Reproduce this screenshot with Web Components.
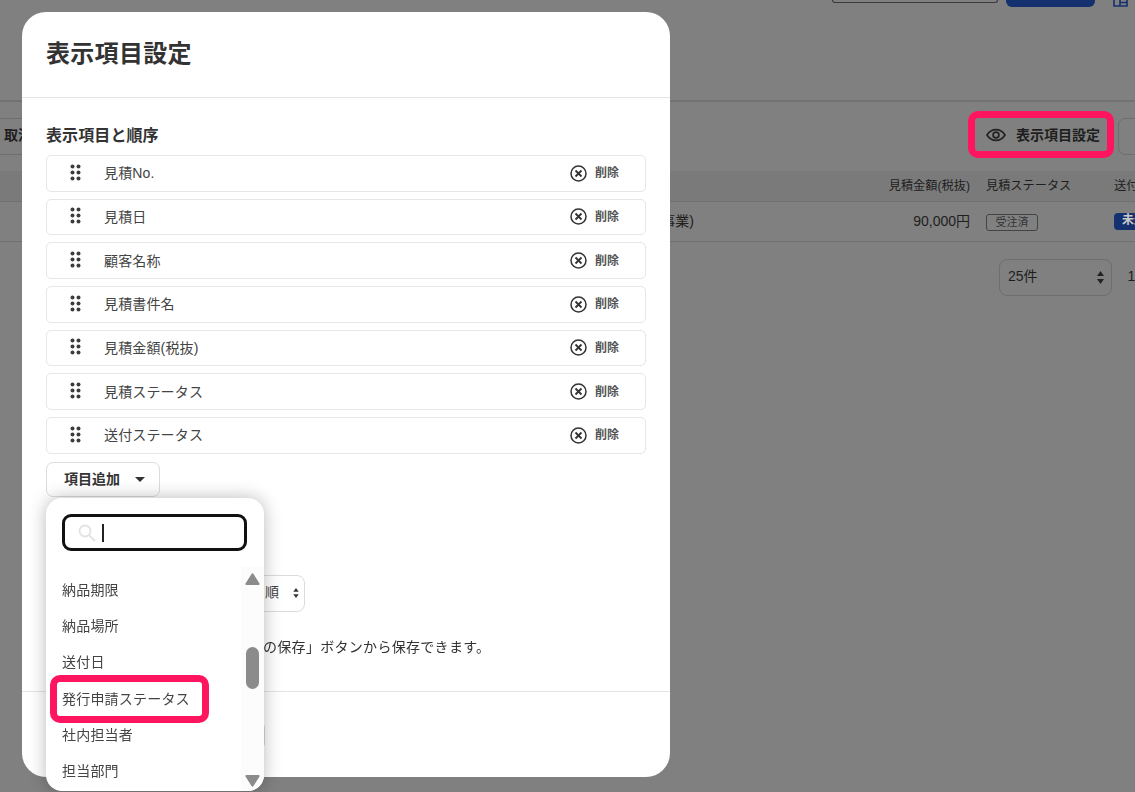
<!DOCTYPE html>
<html lang="ja">
<head>
<meta charset="utf-8">
<title>表示項目設定</title>
<style>
  html, body { margin: 0; height: 792px; overflow: hidden; background: #808080; }
  body { font-family: "Liberation Sans", "Noto Sans CJK JP", sans-serif; font-size: 14px; color: #333; }
</style>
</head>
<body>
<list-page></list-page>
<settings-modal>
  <setting-row>見積No.</setting-row>
  <setting-row>見積日</setting-row>
  <setting-row>顧客名称</setting-row>
  <setting-row>見積書件名</setting-row>
  <setting-row>見積金額(税抜)</setting-row>
  <setting-row>見積ステータス</setting-row>
  <setting-row>送付ステータス</setting-row>
  <add-menu slot="menu">
    <menu-item>納品期限</menu-item>
    <menu-item>納品場所</menu-item>
    <menu-item>送付日</menu-item>
    <menu-item highlight>発行申請ステータス</menu-item>
    <menu-item>社内担当者</menu-item>
    <menu-item>担当部門</menu-item>
  </add-menu>
</settings-modal>

<script>
const spinner = `<svg width="7" height="13" viewBox="0 0 7 13" fill="currentColor"><path d="M3.5 0 7 5H0z"/><path d="M3.5 13 0 8h7z"/></svg>`;

class ListPage extends HTMLElement {
  connectedCallback() {
    this.attachShadow({ mode: "open" }).innerHTML = `
      <style>
        :host { display: block; width: 1135px; overflow: hidden; color: #1e1e1e; }
        .top { display: flex; height: 100px; border-bottom: 2px solid #727272; padding-left: 832px; align-items: flex-start; }
        .search { width: 166px; height: 3px; box-sizing: border-box; border: 1px solid #3a3a3a; border-top: 0; border-radius: 0 0 4px 4px; }
        .primary { width: 89px; height: 7px; margin-left: 8px; background: #14306e; border-radius: 0 0 6px 6px; }
        .grid-icon { margin-left: 18px; color: #14306e; display: block; }
        .toolbar { display: flex; height: 69px; padding-top: 9px; box-sizing: border-box; }
        .cancel { flex: none; width: 60px; height: 37px; margin-top: 7px; box-sizing: border-box; border-top: 1px solid #6e6e6e; border-bottom: 1px solid #6e6e6e; padding-left: 4px; font-weight: 700; font-size: 14px; line-height: 33px; white-space: nowrap; }
        .eye-wrap { margin-left: 908px; width: 146px; height: 47px; box-sizing: border-box; border: 7px solid #ff1460; border-radius: 10px; display: flex; align-items: center; gap: 10px; padding-left: 11px; font-weight: 700; font-size: 14px; white-space: nowrap; flex: none; }
        .eye-wrap span { margin-top: -2px; }
        .other { margin: 7px 0 0 4px; width: 50px; height: 37px; box-sizing: border-box; border: 1px solid #6e6e6e; border-radius: 7px; flex: none; }
        .row { display: grid; grid-template-columns: 694px 276px 144px 21px; align-items: center; white-space: nowrap; }
        .head { height: 31px; background: #7a7a7a; border-bottom: 1px solid #707070; box-sizing: border-box; font-size: 12.200px; }
        .head span { margin-bottom: 2px; }
        .body { height: 40px; border-bottom: 1px solid #707070; box-sizing: border-box; }
        .body .r { margin-bottom: 3px; }
        .r { text-align: right; }
        .pad { padding-left: 16px; }
        .clip { overflow: hidden; }
        .badge { display: inline-block; height: 17px; line-height: 14px; box-sizing: border-box; border: 1px solid #444; border-radius: 3px; padding: 0 8.500px; font-size: 11px; color: #333; }
        .blue { display: block; height: 17px; line-height: 15px; background: #14306e; color: #c8c8c8; border-radius: 4px 0 0 4px; padding-left: 8px; font-size: 12px; font-weight: 700; }
        .pager { display: flex; padding: 17px 0 0 999px; align-items: center; white-space: nowrap; }
        .per { width: 113px; height: 37px; box-sizing: border-box; border: 1px solid #6e6e6e; border-radius: 8px; padding: 0 7px 0 8px; display: flex; align-items: center; justify-content: space-between; flex: none; }
        .per span { margin-top: -5px; }
        .per svg { color: #222; }
        .pager b { font-weight: 400; margin: -3px 0 0 15.500px; }
      </style>
      <div class="top">
        <div class="search"></div>
        <div class="primary"></div>
        <svg class="grid-icon" width="15" height="7" viewBox="0 0 15 7" fill="none" stroke="currentColor" stroke-width="1.6"><path d="M1 0v6h13V0M7 0v6M7 2.500h7"/></svg>
      </div>
      <div class="toolbar">
        <div class="cancel">取消</div>
        <div class="eye-wrap">
          <svg width="20" height="14" viewBox="0 0 20 14" fill="none" stroke="#222" stroke-width="1.7"><path d="M1 7c2.2-3.6 5.3-5.4 9-5.4S16.800 3.400 19 7c-2.200 3.600-5.300 5.400-9 5.400S3.200 10.600 1 7z"/><circle cx="10" cy="7" r="2.900"/></svg>
          <span>表示項目設定</span>
        </div>
        <div class="other"></div>
      </div>
      <div class="row head">
        <span></span><span class="r">見積金額(税抜)</span><span class="pad">見積ステータス</span><span class="clip">送付ステータス</span>
      </div>
      <div class="row body">
        <span class="r">事業)</span><span class="r">90,000円</span><span class="pad"><span class="badge">受注済</span></span><span class="blue clip">未送付</span>
      </div>
      <div class="pager">
        <div class="per"><span>25件</span>${spinner}</div>
        <b>1</b>
      </div>
    `;
  }
}

class SettingRow extends HTMLElement {
  connectedCallback() {
    this.attachShadow({ mode: "open" }).innerHTML = `
      <style>
        :host { display: flex; align-items: center; height: 36.670px; box-sizing: border-box; border: 1px solid #e6e6e6; border-radius: 5px; color: #444; font-size: 14px; letter-spacing: .15px; }
        .grip { margin: -2px 23px 0 23px; display: block; flex: none; }
        .label { flex: 1; margin-top: -2px; }
        .del { display: flex; align-items: center; gap: 8px; width: 75px; font-size: 12px; font-weight: 700; color: #555; letter-spacing: 0; }
        .del span { margin-top: -3px; }
      </style>
      <svg class="grip" width="11" height="17" viewBox="0 0 11 17" fill="#3c3c3c">
        <circle cx="2.500" cy="2.500" r="2"/><circle cx="8.500" cy="2.500" r="2"/>
        <circle cx="2.500" cy="8.500" r="2"/><circle cx="8.500" cy="8.500" r="2"/>
        <circle cx="2.500" cy="14.500" r="2"/><circle cx="8.500" cy="14.500" r="2"/>
      </svg>
      <span class="label"><slot></slot></span>
      <span class="del">
        <svg width="17" height="17" viewBox="0 0 17 17" fill="none" stroke="#333" stroke-width="1.500"><circle cx="8.500" cy="8.500" r="7.500"/><path d="M5.500 5.500l6 6M11.500 5.500l-6 6" stroke-width="1.800"/></svg>
        <span>削除</span>
      </span>
    `;
  }
}

class MenuItem extends HTMLElement {
  connectedCallback() {
    this.attachShadow({ mode: "open" }).innerHTML = `
      <style>
        :host { display: block; position: relative; height: 36.200px; line-height: 36.200px; padding-left: 16px; font-size: 14px; color: #444; white-space: nowrap; letter-spacing: .2px; }
        :host([highlight])::after { content: ""; position: absolute; left: 4px; top: -6px; width: 159px; height: 48px; box-sizing: border-box; border: 7px solid #ff1460; border-radius: 10px; }
      </style>
      <slot></slot>
    `;
  }
}

class AddMenu extends HTMLElement {
  connectedCallback() {
    this.attachShadow({ mode: "open" }).innerHTML = `
      <style>
        :host { display: flex; flex-direction: column; position: absolute; left: 24px; top: 486px; width: 218px; height: 293px; background: #fff; border-radius: 16px; box-shadow: 0 0 18px rgba(0,0,0,.28); overflow: hidden; }
        .search { display: flex; align-items: center; gap: 6px; flex: none; width: 185px; height: 37px; margin: 16px 0 0 16px; padding-left: 13px; box-sizing: border-box; border: 3px solid #111; border-radius: 9px; }
        .caret { width: 2px; height: 18px; background: #222; }
        .area { display: grid; grid-template-columns: 195px 23px; flex: 1; margin-top: 16px; min-height: 0; }
        .items { padding-top: 5px; }
        .bar { display: flex; flex-direction: column; align-items: center; background: #fcfcfc; padding: 6px 0 4px; box-sizing: border-box; }
        .bar svg { display: block; flex: none; }
        .thumb { width: 13px; height: 42px; margin-top: 62px; background: #8b8b8b; border-radius: 7px; }
        .down { margin-top: auto; }
      </style>
      <div class="search">
        <svg width="18" height="18" viewBox="0 0 18 18" fill="none" stroke="#e2e2e2" stroke-width="1.800"><circle cx="7" cy="7" r="5.500"/><path d="M11 11l6 6"/></svg>
        <span class="caret"></span>
      </div>
      <div class="area">
        <div class="items"><slot></slot></div>
        <div class="bar">
          <svg width="15" height="12" viewBox="0 0 15 12" fill="#8b8b8b"><path d="M6.500 1a1.200 1.200 0 0 1 2 0l6 9.500a1 1 0 0 1-1 1.500h-12a1 1 0 0 1-1-1.500z"/></svg>
          <div class="thumb"></div>
          <svg class="down" width="15" height="12" viewBox="0 0 15 12" fill="#8b8b8b"><path d="M6.500 11a1.200 1.200 0 0 0 2 0l6-9.500a1 1 0 0 0-1-1.500h-12a1 1 0 0 0-1 1.500z"/></svg>
        </div>
      </div>
    `;
  }
}

class SettingsModal extends HTMLElement {
  connectedCallback() {
    this.attachShadow({ mode: "open" }).innerHTML = `
      <style>
        :host { display: flex; flex-direction: column; position: fixed; left: 22px; top: 12px; width: 648px; height: 765px; background: #fff; border-radius: 24px; color: #333; }
        header { height: 86px; flex: none; box-sizing: border-box; border-bottom: 1px solid #e4e4e4; padding: 26px 24px 0; }
        h2 { margin: 0; font-size: 24px; line-height: 32px; font-weight: 700; letter-spacing: .3px; }
        main { flex: 1; padding: 28px 24px 0; min-height: 0; }
        h3 { margin: 0 0 9px; font-size: 16px; line-height: 20px; font-weight: 700; letter-spacing: .1px; }
        .rows { display: flex; flex-direction: column; gap: 7px; }
        .add { display: flex; align-items: center; width: 114px; height: 35.500px; margin-top: 8.300px; box-sizing: border-box; border: 1px solid #dcdcdc; border-radius: 7px; padding-left: 17px; font-size: 14px; font-weight: 700; }
        .add span { margin-top: -3px; }
        .add svg { margin-left: 15px; }
        .order { display: flex; align-items: center; justify-content: flex-end; gap: 14px; width: 259px; height: 37px; margin-top: 77.500px; box-sizing: border-box; border: 1px solid #dcdcdc; border-radius: 8px; padding-right: 5px; color: #444; }
        .order span { margin-top: -4px; }
        .order svg { color: #333; width: 6px; height: 10px; }
        .note { margin: 25px 0 0; padding-left: 217px; line-height: 20px; font-size: 14px; letter-spacing: .3px; white-space: nowrap; }
        footer { height: 86px; flex: none; box-sizing: border-box; border-top: 1px solid #e4e4e4; padding: 28px 24px 0; }
        .save { width: 219px; height: 31px; box-sizing: border-box; border: 1px solid #d8d8d8; border-radius: 8px; }
      </style>
      <header><h2>表示項目設定</h2></header>
      <main>
        <h3>表示項目と順序</h3>
        <div class="rows"><slot></slot></div>
        <div class="add"><span>項目追加</span><svg width="10" height="5" viewBox="0 0 10 5" fill="#333"><path d="M0 0h10L5 5z"/></svg></div>
        <div class="order"><span>順</span>${spinner}</div>
        <p class="note">の保存」ボタンから保存できます。</p>
      </main>
      <footer><div class="save"></div></footer>
      <slot name="menu"></slot>
    `;
  }
}

customElements.define("list-page", ListPage);
customElements.define("setting-row", SettingRow);
customElements.define("menu-item", MenuItem);
customElements.define("add-menu", AddMenu);
customElements.define("settings-modal", SettingsModal);
</script>
</body>
</html>
